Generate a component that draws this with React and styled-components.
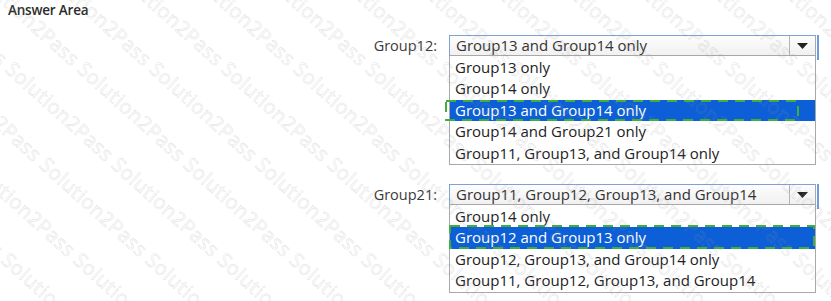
import React from "react";
import styled, { createGlobalStyle } from "styled-components";

const GlobalStyle = createGlobalStyle`
  html, body {
    margin: 0;
    padding: 0;
    background: #ffffff;
  }
  body {
    font-family: "Open Sans", "Noto Sans", sans-serif;
    color: #222;
  }
`;

const dropdowns = [
  {
    label: "Group12:",
    value: "Group13 and Group14 only",
    options: [
      "Group13 only",
      "Group14 only",
      "Group13 and Group14 only",
      "Group14 and Group21 only",
      "Group11, Group13, and Group14 only",
    ],
    selected: 2,
    mark: { left: -4, top: 65, width: 354, height: 21 },
  },
  {
    label: "Group21:",
    value: "Group11, Group12, Group13, and Group14",
    options: [
      "Group14 only",
      "Group12 and Group13 only",
      "Group12, Group13, and Group14 only",
      "Group11, Group12, Group13, and Group14",
    ],
    selected: 1,
    mark: { left: 0, top: 41, width: 366, height: 24 },
  },
];

const watermarkLines = Array.from({ length: 19 }, (_, i) => i);

function App() {
  return (
    <Page>
      <GlobalStyle />
      <Title>Answer Area</Title>
      <Form>
        {dropdowns.map((d) => (
          <Row key={d.label}>
            <Label>{d.label}</Label>
            <Dropdown>
              <Header>
                <HeaderText>{d.value}</HeaderText>
                <ArrowButton>
                  <svg width="11" height="6" viewBox="0 0 11 6">
                    <path d="M0 0 L11 0 L5.5 6 Z" fill="#222" />
                  </svg>
                </ArrowButton>
                <FocusBar />
              </Header>
              <List>
                {d.options.map((opt, i) => (
                  <Option key={opt} active={i === d.selected}>
                    {opt}
                  </Option>
                ))}
              </List>
              <Mark
                style={{
                  left: d.mark.left,
                  top: d.mark.top,
                  width: d.mark.width,
                  height: d.mark.height,
                }}
              >
                <svg width="100%" height="100%">
                  <rect
                    x="1"
                    y="1"
                    width={d.mark.width - 2}
                    height={d.mark.height - 2}
                    fill="none"
                    stroke="#3fae3f"
                    strokeWidth="2"
                    strokeDasharray="10 7"
                  />
                </svg>
              </Mark>
            </Dropdown>
          </Row>
        ))}
      </Form>
      <Watermark>
        {watermarkLines.map((i) => (
          <WatermarkLine key={i} style={{ left: i * 72 - 520 }}>
            {"Solution2Pass ".repeat(7)}
          </WatermarkLine>
        ))}
      </Watermark>
    </Page>
  );
}

const Page = styled.div`
  position: relative;
  width: 831px;
  height: 301px;
  overflow: hidden;
`;

const Title = styled.div`
  padding: 1px 0 0 8px;
  font-size: 13.5px;
  font-weight: 600;
  color: #2b2b2b;
  letter-spacing: -0.2px;
  height: 34px;
`;

const Form = styled.div`
  display: flex;
  flex-direction: column;
  gap: 19px;
`;

const Row = styled.div`
  display: flex;
  align-items: flex-start;
`;

const Label = styled.div`
  width: 437px;
  height: 22px;
  line-height: 22px;
  text-align: right;
  padding-right: 12px;
  box-sizing: content-box;
  font-size: 14.5px;
  color: #3a3a3a;
`;

const Dropdown = styled.div`
  position: relative;
  width: 367px;
  display: flex;
  flex-direction: column;
`;

const Header = styled.div`
  position: relative;
  display: flex;
  height: 21px;
  box-sizing: border-box;
  border: 1px solid #a8a8a8;
  border-top-color: #7ea1d6;
  border-left-color: #7ea1d6;
  background: linear-gradient(#fdfdfd, #f1f1f1);
`;

const HeaderText = styled.div`
  flex: 1;
  padding-left: 6px;
  font-size: 15px;
  line-height: 19px;
  color: #333;
  white-space: nowrap;
  overflow: hidden;
`;

const ArrowButton = styled.div`
  width: 25px;
  border-left: 1px solid #b4b4b4;
  display: flex;
  align-items: center;
  justify-content: center;
`;

const FocusBar = styled.div`
  position: absolute;
  right: -4px;
  top: -1px;
  width: 2px;
  height: 25px;
  background: #6f9be0;
`;

const List = styled.div`
  border: 1px solid #a8a8a8;
  border-top: none;
  background: #ffffff;
  padding-top: 0.5px;
`;

const Option = styled.div`
  height: 21.5px;
  line-height: 21.5px;
  padding-left: 5px;
  font-size: 15px;
  white-space: nowrap;
  background: ${({ active }) => (active ? "#0c5fd6" : "transparent")};
  color: ${({ active }) => (active ? "#ffffff" : "#222")};
`;

const Mark = styled.div`
  position: absolute;
  pointer-events: none;
  svg {
    display: block;
  }
`;

const Watermark = styled.div`
  position: absolute;
  inset: 0;
  pointer-events: none;
  overflow: hidden;
`;

const WatermarkLine = styled.div`
  position: absolute;
  top: -40px;
  white-space: nowrap;
  font-family: "Open Sans", sans-serif;
  font-size: 20px;
  letter-spacing: 0.5px;
  color: rgba(255, 255, 255, 0);
  -webkit-text-stroke: 0.6px rgba(150, 150, 150, 0.28);
  transform-origin: 0 0;
  transform: rotate(42deg);
`;

export default App;
